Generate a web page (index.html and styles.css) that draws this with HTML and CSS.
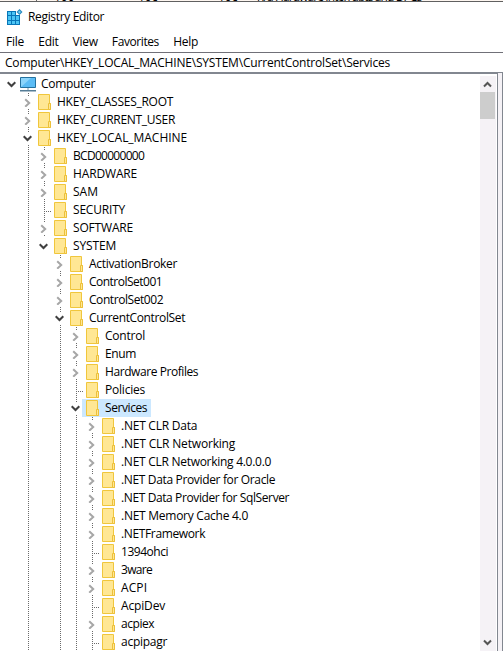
FILE: index.html
```html
<!DOCTYPE html>
<html lang="en">
<head>
<meta charset="utf-8">
<title>Registry Editor</title>
<link rel="stylesheet" href="styles.css">
</head>
<body>
<svg class="defs" aria-hidden="true">
  <symbol id="folder" viewBox="0 0 14 16">
    <path d="M.5.5h11v9h1v6H.5z" fill="#ffe794" stroke="#f0c63c"/>
    <path d="M10.500 15V9.500h2v6h-2z" fill="#ffe794" stroke="#ecc03a"/>
  </symbol>
  <symbol id="right" viewBox="0 0 9 9"><path d="M2.200 1.300l4 3.700-4 3.700" fill="none" stroke="#a6a6a6" stroke-width="2"/></symbol>
  <symbol id="down" viewBox="0 0 9 9"><path d="M.7 2.200l3.800 3.800 3.800-3.800" fill="none" stroke="#404040" stroke-width="2"/></symbol>
</svg>
<div class="window">
  <div class="behind"><span class="scrap edge"></span><span class="scrap one">100</span><span class="scrap two">10c</span><span class="scrap three">10c</span><span class="scrap four">n/a Hardware Interrupts and DPCs</span></div>
  <header class="title">
    <svg class="appicon" width="16" height="16" viewBox="0 0 16 16">
      <path d="M0 2h9v4h4v10H0z" fill="#0876b8"/>
      <path d="M1 3h3v3H1zM5 3h3v3H5zM1 7h3v4H1zM5 7h3v4H5zM9 7h3v4H9zM1 12h3v3H1zM5 12h3v3H5zM9 12h3v3H9z" fill="#4cc5f4"/>
      <path d="M12.500 0l3 3-3 3-3-3z" fill="#2687bd"/><path d="M12.500 1.500L14 3l-1.500 1.500L11 3z" fill="#69cdf4"/>
    </svg>
    <span class="t" data-w="76">Registry Editor</span>
  </header>
  <nav class="menu"><span class="t" data-w="18">File</span><span class="t" data-w="20">Edit</span><span class="t" data-w="25">View</span><span class="t" data-w="47">Favorites</span><span class="t" data-w="25">Help</span></nav>
  <div class="address"><span class="t" data-w="385">Computer\HKEY_LOCAL_MACHINE\SYSTEM\CurrentControlSet\Services</span></div>
  <main class="body">
    <div class="tree" id="tree"></div>
    <div class="scroll">
      <svg width="9" height="7" viewBox="0 0 9 7"><path d="M1 5.500l3.500-3.500L8 5.500" fill="none" stroke="#555" stroke-width="2"/></svg>
      <div class="thumb"></div>
      <svg class="end" width="9" height="7" viewBox="0 0 9 7"><path d="M1 1.500l3.500 3.500L8 1.500" fill="none" stroke="#555" stroke-width="2"/></svg>
    </div>
    <div class="splitter"></div>
  </main>
</div>
<script src="tree.js"></script>
</body>
</html>
```
FILE: styles.css
```css
* { box-sizing: border-box; }
body { margin: 0; background: #fff; color: #000; font: 12px/18px "Open Sans", "Noto Sans", sans-serif; overflow: hidden; }
.defs { display: none; }
.window { width: 503px; height: 651px; display: flex; flex-direction: column; overflow: hidden; }
.behind { height: 2px; border-bottom: 1px solid #606060; flex: none; position: relative; overflow: hidden; background: #fdf6f0; }
.scrap { position: absolute; top: -12px; line-height: 18px; white-space: nowrap; }
.edge { left: 36px; top: 0; width: 1px; height: 1px; background: #666; }
.one { left: 54px; } .two { left: 138px; } .three { left: 218px; } .four { left: 257px; letter-spacing: -0.9px; }
.title { height: 30px; flex: none; display: flex; align-items: center; padding: 0 0 0 7px; gap: 5px; }
.appicon { margin-top: -1px; }
.menu { height: 20px; flex: none; display: flex; padding: 1px 6px 0; gap: 14.2px; }
.t { white-space: pre; flex: none; }
.address { height: 22px; flex: none; border-top: 1px solid #707078; border-bottom: 2px solid #828790; padding: 1px 5px 0; }
.body { flex: 1; min-height: 0; display: flex; padding-top: 1px; }
.tree { flex: 1; overflow: hidden; }
.row { height: 18px; display: flex; }
.gap { width: 8px; flex: none; }
.guide, .node { width: 16px; height: 18px; flex: none; }
.line { background: repeating-linear-gradient(#6a6a6a 0 1px, transparent 1px 2px) 4px 0 / 1px 18px no-repeat; }
.node { display: flex; align-items: center; }
.node svg { width: 9px; height: 13px; background: #fff; margin: 1px 0 0 -1px; }
.leaf { background: repeating-linear-gradient(#6a6a6a 0 1px, transparent 1px 2px) 4px 0 / 1px 18px no-repeat, repeating-linear-gradient(90deg, #6a6a6a 0 1px, transparent 1px 2px) 4px 10px / 7px 1px no-repeat; }
.root .node { width: 12px; }
.label { display: flex; margin-left: -6px; padding: 0 4px; }
.row .folder { width: 14px; height: 16px; flex: none; margin: 1px 5px 0 0; }
.root .label { margin-left: 0; padding-left: 0; }
.root .pc { width: 16px; height: 15px; margin: 2px 5px 0 0; flex: none; }
.selected { background: #cce8ff; }
.scroll { width: 16px; background: #f5f2f6; display: flex; flex-direction: column; align-items: center; flex: none; padding-top: 5px; margin-top: 1px; }
.scroll svg { margin-right: 1px; }
.thumb { width: 15px; height: 27px; background: #cdcdcd; margin: 4px 1px 0 0; }
.scroll .end { margin-top: auto; margin-bottom: 5px; }
.splitter { width: 6px; flex: none; border-left: 1px solid #828790; border-right: 1px solid #828790; background: #f5f2f6; margin: -2px 0 0 1px; }
```
FILE: tree.js
```js
const rows = [
  [0, 'v', 'Computer', 54], [1, '>', 'HKEY_CLASSES_ROOT', 116], [1, '>', 'HKEY_CURRENT_USER', 118],
  [1, 'v', 'HKEY_LOCAL_MACHINE', 130], [2, '>', 'BCD00000000', 71], [2, '>', 'HARDWARE', 64],
  [2, '>', 'SAM', 25], [2, '', 'SECURITY', 52], [2, '>', 'SOFTWARE', 60], [2, 'v', 'SYSTEM', 43],
  [3, '>', 'ActivationBroker', 88], [3, '>', 'ControlSet001', 73], [3, '>', 'ControlSet002', 74],
  [3, 'v', 'CurrentControlSet', 96], [4, '>', 'Control', 40], [4, '>', 'Enum', 31],
  [4, '>', 'Hardware Profiles', 93], [4, '', 'Policies', 40], [4, 'v', 'Services', 42, true],
  [5, '>', '.NET CLR Data', 76], [5, '>', '.NET CLR Networking', 114], [5, '>', '.NET CLR Networking 4.0.0.0', 150],
  [5, '>', '.NET Data Provider for Oracle', 154], [5, '>', '.NET Data Provider for SqlServer', 168],
  [5, '>', '.NET Memory Cache 4.0', 127], [5, '>', '.NETFramework', 84], [5, '', '1394ohci', 47],
  [5, '>', '3ware', 31], [5, '>', 'ACPI', 26], [5, '', 'AcpiDev', 44], [5, '>', 'acpiex', 33], [5, '', 'acpipagr', 46]
];
const pc = '<svg class="pc" viewBox="0 0 16 15"><path d="M.5.5h15v10H.5z" fill="#5bbcf5" stroke="#24719f"/><path d="M1 10L11 1H1z" fill="#8bd4fb"/><path d="M7 11h2v2H7z" fill="#b9cad5"/><path d="M0 13h16v1.500H0z" fill="#557c96"/></svg>';
const folder = '<svg class="folder"><use href="#folder"/></svg>';
document.getElementById('tree').innerHTML = rows.map(([level, state, name, width, selected]) => {
  let guides = '<span class="gap"></span>';
  for (let i = 0; i < level; i++) guides += `<span class="guide ${i === 1 || i > 2 ? 'line' : ''}"></span>`;
  const arrow = state ? `<svg viewBox="0 0 9 9"><use href="#${state === 'v' ? 'down' : 'right'}"/></svg>` : '';
  const line = level === 0 || name === 'SYSTEM' ? '' : state ? 'line' : 'leaf';
  return `<div class="row ${level ? '' : 'root'}">${guides}<span class="node ${line}">${arrow}</span><span class="label ${selected ? 'selected' : ''}">${level ? folder : pc}<span class="t" data-w="${width}">${name}</span></span></div>`;
}).join('');
document.querySelectorAll('.t').forEach(el => {
  const extra = (Number(el.dataset.w) + 0.1 - el.getBoundingClientRect().width) / el.textContent.length;
  el.style.letterSpacing = extra + 'px';
});
```
